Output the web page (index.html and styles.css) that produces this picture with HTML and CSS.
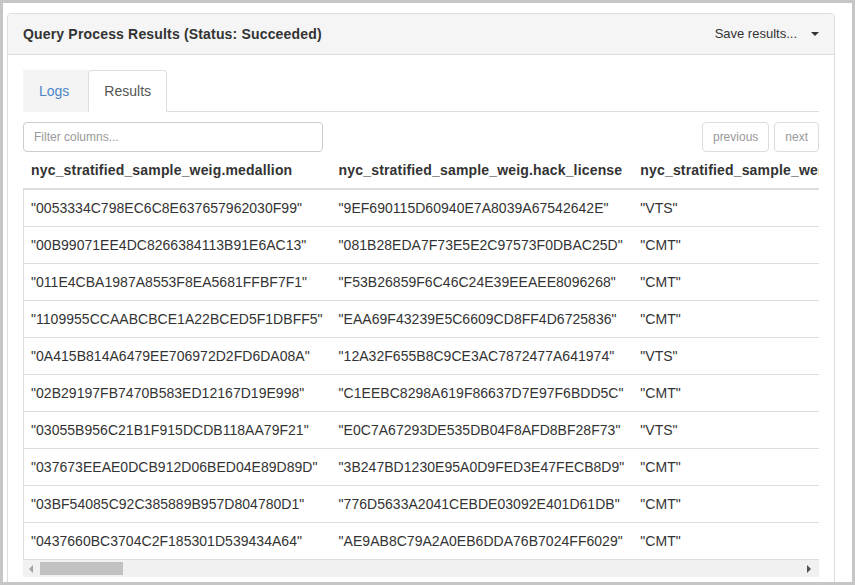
FILE: index.html
```html
<!DOCTYPE html>
<html>
<head>
<meta charset="utf-8">
<link rel="stylesheet" href="styles.css">
</head>
<body>
<div class="frame">
  <div class="panel">
    <div class="panel-heading">
      <span class="panel-title">Query Process Results (Status: Succeeded)</span>
      <span class="save">Save results...<span class="caret"></span></span>
    </div>
    <div class="panel-body">
      <ul class="tabs">
        <li class="tab"><a>Logs</a></li>
        <li class="tab active"><a>Results</a></li>
      </ul>
      <div class="toolbar">
        <input class="filter" type="text" placeholder="Filter columns...">
        <div class="pager">
          <span class="pbtn">previous</span>
          <span class="pbtn">next</span>
        </div>
      </div>
      <div class="scroll">
        <table class="grid">
          <thead>
            <tr>
              <th>nyc_stratified_sample_weig.medallion</th>
              <th>nyc_stratified_sample_weig.hack_license</th>
              <th>nyc_stratified_sample_weig.vendor_id</th>
            </tr>
          </thead>
          <tbody>
            <tr><td>"0053334C798EC6C8E637657962030F99"</td><td>"9EF690115D60940E7A8039A67542642E"</td><td>"VTS"</td></tr>
            <tr><td>"00B99071EE4DC8266384113B91E6AC13"</td><td>"081B28EDA7F73E5E2C97573F0DBAC25D"</td><td>"CMT"</td></tr>
            <tr><td>"011E4CBA1987A8553F8EA5681FFBF7F1"</td><td>"F53B26859F6C46C24E39EEAEE8096268"</td><td>"CMT"</td></tr>
            <tr><td>"1109955CCAABCBCE1A22BCED5F1DBFF5"</td><td>"EAA69F43239E5C6609CD8FF4D6725836"</td><td>"CMT"</td></tr>
            <tr><td>"0A415B814A6479EE706972D2FD6DA08A"</td><td>"12A32F655B8C9CE3AC7872477A641974"</td><td>"VTS"</td></tr>
            <tr><td>"02B29197FB7470B583ED12167D19E998"</td><td>"C1EEBC8298A619F86637D7E97F6BDD5C"</td><td>"CMT"</td></tr>
            <tr><td>"03055B956C21B1F915DCDB118AA79F21"</td><td>"E0C7A67293DE535DB04F8AFD8BF28F73"</td><td>"VTS"</td></tr>
            <tr><td>"037673EEAE0DCB912D06BED04E89D89D"</td><td>"3B247BD1230E95A0D9FED3E47FECB8D9"</td><td>"CMT"</td></tr>
            <tr><td>"03BF54085C92C385889B957D804780D1"</td><td>"776D5633A2041CEBDE03092E401D61DB"</td><td>"CMT"</td></tr>
            <tr><td>"0437660BC3704C2F185301D539434A64"</td><td>"AE9AB8C79A2A0EB6DDA76B7024FF6029"</td><td>"CMT"</td></tr>
          </tbody>
        </table>
      </div>
      <div class="hscroll">
        <span class="arrow-left"></span>
        <span class="thumb"></span>
        <span class="arrow-right"></span>
      </div>
    </div>
  </div>
</div>
</body>
</html>
```

FILE: styles.css
```css
html, body {
  margin: 0;
  padding: 0;
}
body {
  font-family: "Liberation Sans", Arial, sans-serif;
  font-size: 14px;
  line-height: 20px;
  color: #333;
  background: #fff;
}
.frame {
  box-sizing: border-box;
  width: 855px;
  height: 585px;
  border: 3px solid #c6c6c6;
  overflow: hidden;
  background: #fff;
}
.panel {
  margin: 10px 17px 0 4px;
  border: 1px solid #ddd;
  border-radius: 4px;
  background: #fff;
}
.panel-heading {
  display: flex;
  justify-content: space-between;
  align-items: center;
  padding: 10px 15px;
  background: #f5f5f5;
  border-bottom: 1px solid #ddd;
  border-radius: 3px 3px 0 0;
}
.panel-title {
  font-weight: bold;
  color: #333;
  letter-spacing: 0.17px;
}
.save {
  display: flex;
  align-items: center;
  font-size: 13px;
  color: #333;
}
.caret {
  display: inline-block;
  width: 0;
  height: 0;
  margin-left: 14px;
  border-top: 4px solid #333;
  border-left: 4px solid transparent;
  border-right: 4px solid transparent;
}
.panel-body {
  padding: 15px;
}
.tabs {
  display: flex;
  list-style: none;
  margin: 0;
  padding: 0;
  border-bottom: 1px solid #ddd;
}
.tab {
  margin-bottom: -1px;
}
.tab a {
  display: block;
  padding: 10px 15px;
  margin-right: 2px;
  border: 1px solid transparent;
  border-radius: 4px 4px 0 0;
}
.tab:first-child a {
  background: #f4f4f4;
  color: #4d86c6;
  border-radius: 0;
  margin-right: 0;
  padding-right: 18px;
}
.tab.active a {
  background: #fff;
  color: #555;
  border-color: #ddd #ddd transparent #ddd;
}
.toolbar {
  display: flex;
  justify-content: space-between;
  align-items: center;
  margin-top: 10px;
}
.filter {
  box-sizing: border-box;
  width: 300px;
  height: 30px;
  padding: 5px 10px;
  border: 1px solid #ccc;
  border-radius: 4px;
  font-family: "Liberation Sans", Arial, sans-serif;
  font-size: 12px;
  color: #555;
  outline: none;
}
.filter::placeholder {
  color: #999;
}
.pager {
  display: flex;
  gap: 5px;
}
.pbtn {
  box-sizing: border-box;
  height: 30px;
  padding: 5px 10px;
  font-size: 12px;
  line-height: 18px;
  color: #999;
  border: 1px solid #ddd;
  border-radius: 4px;
  background: #fff;
}
.scroll {
  overflow: hidden;
  width: 100%;
}
.grid {
  border-collapse: collapse;
  white-space: nowrap;
}
.grid th {
  text-align: left;
  font-weight: bold;
  letter-spacing: 0.17px;
  padding: 8px;
  border-bottom: 2px solid #ddd;
}
.grid td {
  padding: 8px;
  letter-spacing: 0.03px;
  border-top: 1px solid #ddd;
}
.grid tbody tr:first-child td {
  border-top: 0;
}
.grid tbody tr:last-child td {
  border-bottom: 1px solid #ddd;
}
.grid td:first-child {
  box-shadow: inset 1px 0 0 #ddd;
}
.hscroll {
  display: flex;
  align-items: center;
  height: 17px;
  background: #f1f1f1;
}
.arrow-left {
  width: 0;
  height: 0;
  margin-left: 6px;
  border-right: 4px solid #a3a3a3;
  border-top: 4px solid transparent;
  border-bottom: 4px solid transparent;
}
.thumb {
  width: 83px;
  height: 13px;
  margin-left: 7px;
  background: #c1c1c1;
}
.arrow-right {
  width: 0;
  height: 0;
  margin-left: auto;
  margin-right: 8px;
  border-left: 4px solid #505050;
  border-top: 4px solid transparent;
  border-bottom: 4px solid transparent;
}
```
